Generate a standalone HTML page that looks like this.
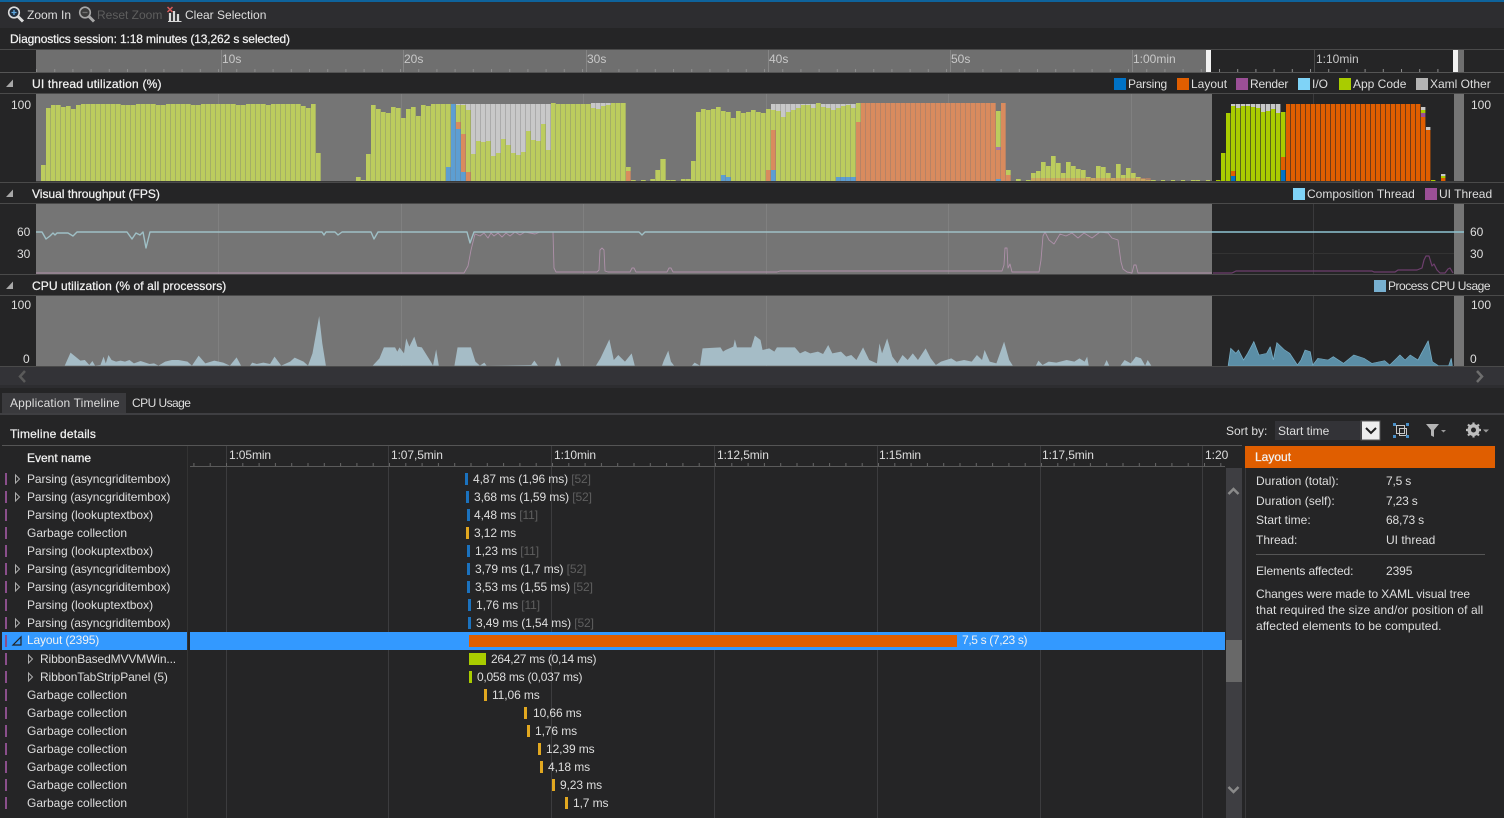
<!DOCTYPE html>
<html><head><meta charset="utf-8"><style>
html,body{margin:0;padding:0;background:#252526;width:1504px;height:818px;overflow:hidden}
#p{position:relative;width:1504px;height:818px;overflow:hidden;font-family:"Liberation Sans",sans-serif;font-size:12px;color:#dedede}
svg{position:absolute;left:0;top:0}
.t{position:absolute;white-space:nowrap;line-height:16px;height:16px}
.h{color:#f1f1f1;-webkit-text-stroke:.25px #f1f1f1}
.w{color:#f1f1f1}
.g{color:#5f5f5f}
.r{color:#c8c8c8}
.e{letter-spacing:-.1px}
.a{letter-spacing:-.08px}
.b{letter-spacing:-.13px}
</style></head><body><div id="p">
<svg width="1504" height="818" viewBox="0 0 1504 818">
<defs>
<pattern id="gapA" patternUnits="userSpaceOnUse" x="0" y="0" width="5" height="10"><rect width="1" height="10" fill="#757575" fill-opacity=".35"/></pattern>
<pattern id="gapB" patternUnits="userSpaceOnUse" x="0" y="0" width="5" height="10"><rect width="1" height="10" fill="#252526" fill-opacity=".6"/></pattern>
<pattern id="tk" patternUnits="userSpaceOnUse" x="36" y="69" width="18.2" height="3"><rect width="1" height="3" fill="#8c8c8c"/></pattern>
<pattern id="tk2" patternUnits="userSpaceOnUse" x="226" y="463" width="16.3" height="3"><rect width="1" height="3" fill="#666"/></pattern>
</defs>
<rect x="0" y="0" width="1504" height="2" fill="#0e639c"/>
<rect x="0" y="2" width="1504" height="26" fill="#2d2d30"/>
<rect x="0" y="28" width="1504" height="21" fill="#252526"/>
<rect x="0" y="49" width="1504" height="1" fill="#4a4a4a"/>
<!-- ruler -->
<rect x="36" y="50" width="1170" height="22" fill="#6f6f6f"/>
<rect x="1458" y="50" width="6" height="22" fill="#6f6f6f"/>
<rect x="36" y="69" width="1418" height="3" fill="url(#tk)"/>
<g fill="#858585"><rect x="221" y="50" width="1" height="22"/><rect x="403" y="50" width="1" height="22"/><rect x="586" y="50" width="1" height="22"/><rect x="768" y="50" width="1" height="22"/><rect x="950" y="50" width="1" height="22"/><rect x="1132" y="50" width="1" height="22"/><rect x="1314" y="50" width="1" height="22" fill="#4a4a4a"/></g>
<rect x="1206" y="50" width="5" height="22" fill="#f2f2f2"/>
<rect x="1453" y="50" width="5" height="22" fill="#f2f2f2"/>
<rect x="0" y="72" width="1504" height="1" fill="#555"/>
<rect x="0" y="93" width="1504" height="1" fill="#4a4a4a"/>
<rect x="0" y="182" width="1504" height="1" fill="#4a4a4a"/>
<rect x="0" y="203" width="1504" height="1" fill="#4a4a4a"/>
<rect x="0" y="274" width="1504" height="1" fill="#4a4a4a"/>
<rect x="0" y="295" width="1504" height="1" fill="#4a4a4a"/>
<rect x="0" y="366" width="1504" height="1" fill="#4a4a4a"/>
<g fill="#757575">
<rect x="36" y="94" width="1176" height="87"/><rect x="1454" y="94" width="10" height="87"/>
<rect x="36" y="204" width="1176" height="70"/><rect x="1454" y="204" width="10" height="70"/>
<rect x="36" y="296" width="1176" height="70"/><rect x="1454" y="296" width="10" height="70"/>
</g>
<rect x="36" y="181" width="1428" height="1" fill="#3a3a3a"/>
<g fill="#808080"><rect x="218" y="94" width="1" height="87"/><rect x="401" y="94" width="1" height="87"/><rect x="583" y="94" width="1" height="87"/><rect x="766" y="94" width="1" height="87"/><rect x="948" y="94" width="1" height="87"/><rect x="1131" y="94" width="1" height="87"/>
<rect x="218" y="204" width="1" height="70"/><rect x="401" y="204" width="1" height="70"/><rect x="583" y="204" width="1" height="70"/><rect x="766" y="204" width="1" height="70"/><rect x="948" y="204" width="1" height="70"/><rect x="1131" y="204" width="1" height="70"/>
<rect x="218" y="296" width="1" height="70"/><rect x="401" y="296" width="1" height="70"/><rect x="583" y="296" width="1" height="70"/><rect x="766" y="296" width="1" height="70"/><rect x="948" y="296" width="1" height="70"/><rect x="1131" y="296" width="1" height="70"/></g>
<g fill="#3a3a3c"><rect x="1313" y="94" width="1" height="87"/><rect x="1313" y="204" width="1" height="70"/><rect x="1313" y="296" width="1" height="70"/></g>
<!-- UI thread unselected bars -->
<rect x="456" y="104" width="95" height="77" fill="#c8c8c8"/>
<rect x="591" y="103" width="20" height="20" fill="#c8c8c8"/>
<rect x="771" y="104" width="85" height="30" fill="#c8c8c8"/>
<path fill="#bccc5e" d="M41 181V165h5V108h5V105h5V105h5V107h5V106h5V109h5V105h5V104h40V105h15V104h20V105h10V104h25V105h10V104h20V104h15V105h10V104h20V105h5V104h20V104h10V106h5V108h5V104h5V181z
M316 181V153h5V181zM356 181V177h5V180h5V154h5V105h5V109h5V112h5V113h5V107h5V108h5V118h5V109h5V107h5V116h5V105h5V106h5V104h20V181z
M456 181V105h10V110h5V154h5V141h5V142h5V141h5V156h5V153h5V139h5V145h5V153h5V155h5V152h5V131h5V140h5V141h5V124h5V150h5V103h5V104h35V108h5V109h5V106h5V105h5V103h15V181z
M626 181V167h5V180h5V181zM641 181V180h5V181zM650 181V179h5V170h5V159h6V180h10V181zM681 181V179h10V181z
M691 181V161h5V112h5V109h5V110h5V109h5V107h5V111h5V112h5V118h5V111h5V113h5V112h5V110h5V112h5V113h5V109h5V110h5V111h5V117h5V112h5V110h5V108h5V105h10V108h5V103h5V107h5V108h5V110h5V108h5V106h5V105h5V108h5V103h5V181z
M996 181V111h5V181zM1006 181V170h5V181z
M1016 181V179h5V181zM1026 181V180h5V173h5V171h5V162h5V166h5V156h5V163h5V173h5V162h5V166h5V169h5V170h5V177h5V178h5V166h5V167h5V173h5V178h5V164h5V175h5V168h5V173h5V177h5V179h5V180h10V181z
M1161 181V180h4V181zM1171 181V180h4V181zM1181 181V180h4V181zM1191 181V180h9V181zM1206 181V180h4V181z"/>
<g fill="#d98b5e">
<path d="M456 122h5v7h-5zM461 134h5v38h-5zM466 172h5v9h-5zM626 171h5v10h-5zM766 170h5v11h-5zM771 130h5v40h-5zM856 122h5v59h-5zM861 103h135v78h-135zM996 150h5v31h-5zM1001 103h5v78h-5zM1006 175h5v6h-5z"/>
<path d="M1031 178h120v3h-120z" opacity=".55"/>
</g>
<path fill="#5d9ed2" d="M446 167h5v14h-5zM451 104h5v77h-5zM456 129h5v52h-5zM461 172h5v9h-5zM771 170h5v11h-5zM721 175h5v6h-5zM726 177h5v4h-5zM836 177h20v4h-20zM996 179h5v2h-5z"/>
<rect x="996" y="147" width="5" height="3" fill="#a878a8"/>
<rect x="36" y="94" width="1176" height="87" fill="url(#gapA)"/>
<!-- UI thread selected bars -->
<rect x="1231" y="104" width="50" height="12" fill="#c8c8c8"/>
<rect x="1421" y="107" width="5" height="3" fill="#c8c8c8"/><rect x="1426" y="127" width="5" height="3" fill="#c8c8c8"/><rect x="1441" y="174" width="5" height="2" fill="#c8c8c8"/>
<path fill="#a9cc00" d="M1216 181V180h5V153h5V113h5V106h5V108h5V106h5V106h5V107h5V108h5V112h5V111h5V109h5V113h5V112h5V181z"/>
<path fill="#e05e00" d="M1231 171h5v5h-5zM1281 157h5v13h-5zM1286 104h135v77h-135zM1421 117h5v64h-5zM1426 130h5v51h-5zM1441 178h5v3h-5z"/>
<path fill="#0072c6" d="M1231 176h5v5h-5zM1281 170h5v11h-5z"/>
<rect x="1421" y="110" width="5" height="3" fill="#a9cc00"/><rect x="1421" y="113" width="5" height="4" fill="#9b4f96"/>
<rect x="1441" y="176" width="5" height="2" fill="#a9cc00"/><rect x="1431" y="180" width="5" height="1" fill="#a9cc00"/>
<rect x="1212" y="94" width="242" height="87" fill="url(#gapB)"/>
<!-- FPS -->
<g fill="none" stroke-linejoin="round">
<path stroke="#ae90a9" stroke-width=".9" d="M36 273H464L468 266L471 250L475 234L480 236L484 233L488 238L491 233L494 236L498 233L502 237L506 233L510 236L515 232L520 235L525 232L535 234L540 232H553L554 268L556 272H597L599 270L600 250L602 248L604 250L605 271L608 272H630L632 268L634 268L636 272H667L669 268L671 268L673 272H777L780 271H1002L1004 265L1005 248L1007 248L1008 268L1010 264L1012 272H1039L1041 260L1043 236L1045 232L1049 240L1054 244L1060 234L1066 236L1072 233L1078 238L1084 233L1092 238L1100 232L1108 233L1112 238L1118 240L1121 262L1123 269L1127 272L1132 273L1134 265L1136 265L1138 273H1212"/>
<path stroke="#6e3f6e" stroke-width="1.2" d="M1213 273H1232L1236 271H1372L1374 272H1395L1398 270H1417L1422 268L1424 260L1426 256L1429 256L1432 266L1434 264L1437 270L1440 273L1445 273L1448 269L1450 268L1453 273"/>
<path stroke="#9fc0c6" stroke-width="1.4" d="M36 232H42L46 239L50 236L53 233L55 235L57 233H68L73 236L77 232H127L132 239L136 233L140 235L143 232L146 248L150 232H322L324 235L326 232H335L338 235L342 232H371L374 239L378 232H467L470 243L474 232H639L642 235L645 232H1212"/>
<path stroke="#8fc4d2" stroke-width="1.4" d="M1212 232H1464"/>
</g>
<rect x="1212" y="253" width="242" height="1" fill="#333"/>
<!-- CPU -->
<g transform="translate(0,190) scale(.4464,.3333)">
<polygon fill="#a5bcc6" points="145,527 158,488 180,512 190,510 200,525 207,513 213,527 225,525 232,500 237,520 243,495 250,510 260,515 270,512 280,515 290,510 300,520 315,513 335,522 345,520 355,527 370,515 385,510 400,510 420,515 430,527 445,497 460,520 480,512 500,518 515,527 530,502 540,527 560,527 565,518 575,522 590,518 605,522 615,500 630,527 650,515 660,503 680,515 690,527 700,490 715,378 722,460 730,527 835,527 850,505 860,472 885,472 890,485 895,472 905,490 910,445 917,470 928,440 935,470 945,472 965,515 970,527 977,478 983,527 1018,527 1025,472 1055,472 1065,515 1075,527 1085,518 1090,527 1190,525 1197,512 1205,527 1243,527 1250,500 1257,527 1335,527 1345,505 1365,448 1375,510 1385,495 1400,515 1415,490 1422,527 1483,527 1487,512 1497,482 1503,515 1510,527 1550,527 1556,518 1568,527"/>
</g>
<g transform="translate(700,190) scale(.5128,.3333)">
<polygon fill="#a5bcc6" points="0,527 5,475 40,472 45,485 50,480 65,470 68,448 72,472 100,472 107,437 118,450 122,480 135,475 145,485 150,472 185,472 195,490 205,483 215,490 230,485 240,492 250,465 258,490 275,485 285,500 295,495 305,510 318,472 330,510 345,520 350,460 355,490 365,445 375,500 385,520 395,495 405,510 415,490 425,510 440,475 450,505 460,525 470,515 490,505 500,515 515,510 530,515 540,495 550,510 555,480 565,515 578,520 593,455 603,510 610,527 655,527 660,512 668,525 680,515 695,518 715,510 730,515 740,505 750,515 755,500 758,527 788,527 793,510 798,527 820,527 828,510 840,520 850,500 860,505 868,527 873,510 880,527"/>
<polygon fill="#5b8ea6" stroke="#78aec6" stroke-width="1.5" points="1030,527 1035,475 1045,490 1050,480 1060,510 1068,490 1080,455 1090,495 1105,490 1112,470 1118,510 1125,458 1140,480 1150,490 1165,525 1172,510 1180,480 1190,485 1195,525 1205,505 1225,510 1235,500 1255,520 1275,495 1295,505 1310,520 1335,512 1345,525 1365,495 1375,510 1385,495 1400,510 1420,452 1428,515 1440,527 1460,527 1465,505 1467,527"/>
</g>
<g fill="#a8a8a8"><path d="M13 79.500V87H6z"/><path d="M13 189.500V197H6z"/><path d="M13 281.500V289H6z"/></g>
<rect x="1114" y="78" width="12" height="12" fill="#0072c6"/><rect x="1177" y="78" width="12" height="12" fill="#e05e00"/><rect x="1236" y="78" width="12" height="12" fill="#9b4f96"/><rect x="1298" y="78" width="12" height="12" fill="#7fd3f7"/><rect x="1339" y="78" width="12" height="12" fill="#a9cc00"/><rect x="1416" y="78" width="12" height="12" fill="#b4b4b4"/>
<rect x="1293" y="188" width="12" height="12" fill="#7fd3f7"/><rect x="1425" y="188" width="12" height="12" fill="#9b4f96"/>
<rect x="1374" y="280" width="12" height="12" fill="#78b0d0"/>
<rect x="0" y="367" width="1504" height="18" fill="#333337"/>
<rect x="0" y="385" width="1504" height="3" fill="#2d2d30"/>
<path d="M25 371l-5 5.500 5 5.500" fill="none" stroke="#5a5a5a" stroke-width="2.500"/>
<path d="M1477 371l5 5.500-5 5.500" fill="none" stroke="#6e6e6e" stroke-width="2.500"/>
<rect x="2" y="393" width="124" height="21" fill="#3a3a3d"/>
<rect x="0" y="413" width="1504" height="2" fill="#3f3f42"/>
<rect x="2" y="445" width="1240" height="1" fill="#555"/>
<rect x="187" y="446" width="1" height="372" fill="#333"/>
<g fill="#3c3c3e"><rect x="226" y="446" width="1" height="372"/><rect x="388" y="446" width="1" height="372"/><rect x="551" y="446" width="1" height="372"/><rect x="714" y="446" width="1" height="372"/><rect x="877" y="446" width="1" height="372"/><rect x="1040" y="446" width="1" height="372"/><rect x="1202" y="446" width="1" height="372"/></g>
<rect x="190" y="466" width="1035" height="1" fill="#5a5a5a"/>
<rect x="190" y="463" width="1035" height="3" fill="url(#tk2)"/>
<rect x="2" y="632" width="185" height="18" fill="#3399ff"/>
<rect x="190" y="632" width="1035" height="18" fill="#3399ff"/>
<g fill="#8a4f8b">
<rect x="5" y="473" width="2" height="12"/><rect x="5" y="491" width="2" height="12"/><rect x="5" y="509" width="2" height="12"/><rect x="5" y="527" width="2" height="12"/><rect x="5" y="545" width="2" height="12"/><rect x="5" y="563" width="2" height="12"/><rect x="5" y="581" width="2" height="12"/><rect x="5" y="599" width="2" height="12"/><rect x="5" y="617" width="2" height="12"/><rect x="5" y="635" width="2" height="12"/><rect x="5" y="653" width="2" height="12"/><rect x="5" y="671" width="2" height="12"/><rect x="5" y="689" width="2" height="12"/><rect x="5" y="707" width="2" height="12"/><rect x="5" y="725" width="2" height="12"/><rect x="5" y="743" width="2" height="12"/><rect x="5" y="761" width="2" height="12"/><rect x="5" y="779" width="2" height="12"/><rect x="5" y="797" width="2" height="12"/>
</g>
<g fill="none" stroke="#b0b0b0"><path d="M15.500 475v8l4-4z"/><path d="M15.500 493v8l4-4z"/><path d="M15.500 565v8l4-4z"/><path d="M15.500 583v8l4-4z"/><path d="M15.500 619v8l4-4z"/><path d="M28.500 655v8l4-4z"/><path d="M28.500 673v8l4-4z"/></g>
<path d="M21 637v8h-8z" fill="none" stroke="#222" stroke-width="1.200"/>
<g fill="#1b72be"><rect x="465" y="473" width="3" height="12"/><rect x="466" y="491" width="3" height="12"/><rect x="467" y="509" width="3" height="12"/><rect x="467" y="545" width="3" height="12"/><rect x="467" y="563" width="3" height="12"/><rect x="467" y="581" width="3" height="12"/><rect x="468" y="599" width="3" height="12"/><rect x="468" y="617" width="3" height="12"/></g>
<g fill="#e2a820"><rect x="466" y="527" width="3" height="12"/><rect x="484" y="689" width="3" height="12"/><rect x="524" y="707" width="3" height="12"/><rect x="527" y="725" width="3" height="12"/><rect x="538" y="743" width="3" height="12"/><rect x="540" y="761" width="3" height="12"/><rect x="552" y="779" width="3" height="12"/><rect x="565" y="797" width="3" height="12"/></g>
<rect x="469" y="635" width="488" height="12" fill="#e05e00"/>
<rect x="469" y="653" width="17" height="12" fill="#a9cc00"/>
<rect x="469" y="671" width="3" height="12" fill="#a9cc00"/>
<rect x="1226" y="468" width="16" height="350" fill="#3e3e42"/>
<rect x="1226" y="640" width="16" height="42" fill="#686868"/>
<path d="M1228.500 494l5-5 5 5" fill="none" stroke="#8a8a8a" stroke-width="2.500"/>
<path d="M1228.500 787l5 5 5-5" fill="none" stroke="#8a8a8a" stroke-width="2.500"/>
<rect x="1245" y="446" width="1" height="372" fill="#3a3a3c"/>
<rect x="1245" y="446" width="250" height="22" fill="#e05e00"/>
<rect x="1256" y="554" width="229" height="1" fill="#555"/>
<rect x="1275" y="421" width="105" height="19" fill="#333337"/>
<rect x="1362" y="421" width="18" height="19" fill="#eeeeee"/>
<rect x="1361" y="421" width="19" height="19" fill="none" stroke="#555"/>
<path d="M1366 428l5 5 5-5" fill="none" stroke="#1e1e1e" stroke-width="2"/>
<g fill="none" stroke="#c8c8c8"><rect x="1396.500" y="425.500" width="8" height="8"/><rect x="1399.500" y="428.500" width="7" height="7"/></g>
<g fill="#4a90c8"><rect x="1393" y="423" width="3" height="3"/><rect x="1406" y="423" width="3" height="3"/><rect x="1393" y="435" width="3" height="3"/><rect x="1406" y="435" width="3" height="3"/></g>
<path d="M1426 424h13l-5 6v7l-3-1.500V430z" fill="#b4b4b4"/><path d="M1441 430h5l-2.500 2.500z" fill="#999"/>
<g><circle cx="1473.500" cy="430" r="4.500" fill="none" stroke="#bdbdbd" stroke-width="3"/><path d="M1473.500 422.500v15M1466 430h15M1468 424.500l11 11M1479 424.500l-11 11" stroke="#bdbdbd" stroke-width="2.200"/><circle cx="1473.500" cy="430" r="2.500" fill="#252526"/></g>
<path d="M1483 429.500h6l-3 3z" fill="#999"/>
<g fill="none"><circle cx="14" cy="12.500" r="5.300" stroke="#dcdcdc" stroke-width="1.600" fill="#1f2d3d"/><path d="M18 16.500l5 5" stroke="#dcdcdc" stroke-width="3"/><path d="M11.500 12.500h5M14 10v5" stroke="#5fa8e0" stroke-width="1.300"/></g>
<g fill="none"><circle cx="85" cy="12.500" r="5.300" stroke="#a8a8a8" stroke-width="1.600" fill="#3a3a3a"/><path d="M89 16.500l5 5" stroke="#a8a8a8" stroke-width="3"/><path d="M82.500 12.500h5" stroke="#707070" stroke-width="1.300"/></g>
<g><path d="M170 13v9M174 11v11M178 14v8" stroke="#d8d8d8" stroke-width="2.200" fill="none"/><path d="M168 21.500h13.500" stroke="#d8d8d8"/><path d="M167.500 7l5 5M172.500 7l-5 5" stroke="#d65a5a" stroke-width="1.500"/></g>
</svg>

<span class="t" style="left:27px;top:7px">Zoom In</span>
<span class="t" style="left:97px;top:7px;color:#5e5e5e">Reset Zoom</span>
<span class="t" style="left:185px;top:7px">Clear Selection</span>
<span class="t h" style="left:10px;top:31px;letter-spacing:-.13px">Diagnostics session: 1:18 minutes (13,262 s selected)</span>
<span class="t r" style="left:222px;top:51px">10s</span><span class="t r" style="left:404px;top:51px">20s</span><span class="t r" style="left:587px;top:51px">30s</span><span class="t r" style="left:769px;top:51px">40s</span><span class="t r" style="left:951px;top:51px">50s</span><span class="t r" style="left:1133px;top:51px">1:00min</span><span class="t r" style="left:1316px;top:51px">1:10min</span>
<span class="t h" style="left:32px;top:76px;letter-spacing:.2px">UI thread utilization (%)</span>
<span class="t" style="left:1128px;top:76px;letter-spacing:-.25px">Parsing</span><span class="t" style="left:1191px;top:76px">Layout</span><span class="t" style="left:1250px;top:76px;letter-spacing:-.2px">Render</span><span class="t" style="left:1312px;top:76px">I/O</span><span class="t" style="left:1353px;top:76px">App Code</span><span class="t" style="left:1430px;top:76px">Xaml Other</span>
<span class="t h" style="left:32px;top:186px">Visual throughput (FPS)</span>
<span class="t" style="left:1307px;top:186px">Composition Thread</span><span class="t" style="left:1439px;top:186px">UI Thread</span>
<span class="t h" style="left:32px;top:278px;letter-spacing:.08px">CPU utilization (% of all processors)</span>
<span class="t" style="left:1388px;top:278px;letter-spacing:-.47px">Process CPU Usage</span>
<span class="t" style="left:11px;top:97px">100</span><span class="t" style="left:1471px;top:97px">100</span>
<span class="t" style="left:17px;top:224px">60</span><span class="t" style="left:1470px;top:224px">60</span>
<span class="t" style="left:17px;top:246px">30</span><span class="t" style="left:1470px;top:246px">30</span>
<span class="t" style="left:11px;top:297px">100</span><span class="t" style="left:1471px;top:297px">100</span>
<span class="t" style="left:23px;top:351px">0</span><span class="t" style="left:1470px;top:351px">0</span>
<span class="t" style="left:10px;top:395px;letter-spacing:.15px">Application Timeline</span>
<span class="t" style="left:132px;top:395px;letter-spacing:-.55px">CPU Usage</span>
<span class="t h" style="left:10px;top:426px;letter-spacing:.2px">Timeline details</span>
<span class="t" style="left:1226px;top:423px">Sort by:</span>
<span class="t" style="left:1278px;top:423px">Start time</span>
<span class="t h" style="left:27px;top:450px">Event name</span>
<span class="t e" style="left:229px;top:447px">1:05min</span><span class="t e" style="left:391px;top:447px">1:07,5min</span><span class="t e" style="left:554px;top:447px">1:10min</span><span class="t e" style="left:717px;top:447px">1:12,5min</span><span class="t e" style="left:879px;top:447px">1:15min</span><span class="t e" style="left:1042px;top:447px">1:17,5min</span><span class="t" style="left:1205px;top:447px">1:20</span>
<span class="t a" style="left:27px;top:471px">Parsing (asyncgriditembox)</span>
<span class="t a" style="left:27px;top:489px">Parsing (asyncgriditembox)</span>
<span class="t" style="left:27px;top:507px">Parsing (lookuptextbox)</span>
<span class="t" style="left:27px;top:525px">Garbage collection</span>
<span class="t" style="left:27px;top:543px">Parsing (lookuptextbox)</span>
<span class="t a" style="left:27px;top:561px">Parsing (asyncgriditembox)</span>
<span class="t a" style="left:27px;top:579px">Parsing (asyncgriditembox)</span>
<span class="t" style="left:27px;top:597px">Parsing (lookuptextbox)</span>
<span class="t a" style="left:27px;top:615px">Parsing (asyncgriditembox)</span>
<span class="t w" style="left:27px;top:632px;letter-spacing:-.15px">Layout (2395)</span>
<span class="t b" style="left:40px;top:651px">RibbonBasedMVVMWin...</span>
<span class="t b" style="left:40px;top:669px">RibbonTabStripPanel (5)</span>
<span class="t" style="left:27px;top:687px">Garbage collection</span>
<span class="t" style="left:27px;top:705px">Garbage collection</span>
<span class="t" style="left:27px;top:723px">Garbage collection</span>
<span class="t" style="left:27px;top:741px">Garbage collection</span>
<span class="t" style="left:27px;top:759px">Garbage collection</span>
<span class="t" style="left:27px;top:777px">Garbage collection</span>
<span class="t" style="left:27px;top:795px">Garbage collection</span>
<span class="t e" style="left:473px;top:471px">4,87 ms (1,96 ms) <span class="g">[52]</span></span>
<span class="t e" style="left:474px;top:489px">3,68 ms (1,59 ms) <span class="g">[52]</span></span>
<span class="t e" style="left:474px;top:507px">4,48 ms <span class="g">[11]</span></span>
<span class="t e" style="left:474px;top:525px">3,12 ms</span>
<span class="t e" style="left:475px;top:543px">1,23 ms <span class="g">[11]</span></span>
<span class="t e" style="left:475px;top:561px">3,79 ms (1,7 ms) <span class="g">[52]</span></span>
<span class="t e" style="left:475px;top:579px">3,53 ms (1,55 ms) <span class="g">[52]</span></span>
<span class="t e" style="left:476px;top:597px">1,76 ms <span class="g">[11]</span></span>
<span class="t e" style="left:476px;top:615px">3,49 ms (1,54 ms) <span class="g">[52]</span></span>
<span class="t w" style="left:962px;top:632px;letter-spacing:-.35px">7,5 s (7,23 s)</span>
<span class="t" style="left:491px;top:651px;letter-spacing:-.25px">264,27 ms (0,14 ms)</span>
<span class="t" style="left:477px;top:669px;letter-spacing:-.25px">0,058 ms (0,037 ms)</span>
<span class="t e" style="left:492px;top:687px">11,06 ms</span>
<span class="t e" style="left:533px;top:705px">10,66 ms</span>
<span class="t e" style="left:535px;top:723px">1,76 ms</span>
<span class="t e" style="left:546px;top:741px">12,39 ms</span>
<span class="t e" style="left:548px;top:759px">4,18 ms</span>
<span class="t e" style="left:560px;top:777px">9,23 ms</span>
<span class="t e" style="left:573px;top:795px">1,7 ms</span>
<span class="t h" style="left:1255px;top:449px">Layout</span>
<span class="t" style="left:1256px;top:473px">Duration (total):</span><span class="t" style="left:1386px;top:473px;letter-spacing:-.2px">7,5 s</span>
<span class="t" style="left:1256px;top:493px">Duration (self):</span><span class="t" style="left:1386px;top:493px;letter-spacing:-.2px">7,23 s</span>
<span class="t" style="left:1256px;top:512px">Start time:</span><span class="t" style="left:1386px;top:512px;letter-spacing:-.2px">68,73 s</span>
<span class="t" style="left:1256px;top:532px">Thread:</span><span class="t" style="left:1386px;top:532px">UI thread</span>
<span class="t" style="left:1256px;top:563px;letter-spacing:-.1px">Elements affected:</span><span class="t" style="left:1386px;top:563px;letter-spacing:-.1px">2395</span>
<span class="t" style="left:1256px;top:586px;letter-spacing:-.1px">Changes were made to XAML visual tree</span>
<span class="t" style="left:1256px;top:602px;letter-spacing:.1px">that required the size and/or position of all</span>
<span class="t" style="left:1256px;top:618px;letter-spacing:.05px">affected elements to be computed.</span>
</div></body></html>
